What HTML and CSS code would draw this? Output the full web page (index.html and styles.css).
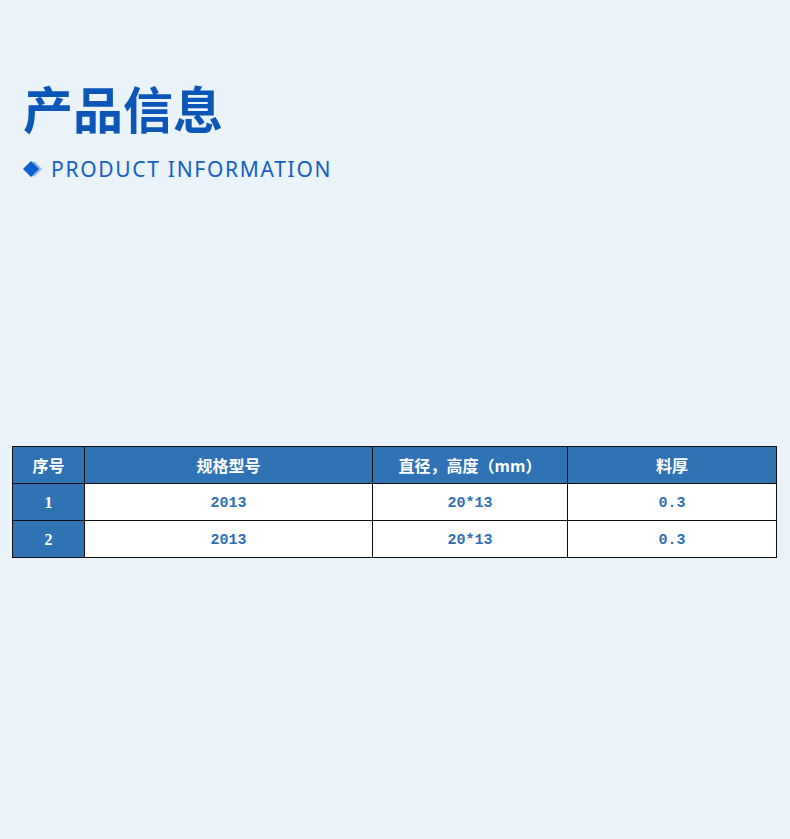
FILE: index.html
```html
<!DOCTYPE html>
<html lang="zh">
<head>
<meta charset="utf-8">
<link rel="stylesheet" href="styles.css">
</head>
<body>
<div class="page">
  <header class="head">
    <h1 class="title">产品信息</h1>
    <div class="sub">
      <svg class="diamond" width="20" height="18" viewBox="0 0 20 18">
        <polygon points="11,1 19,9 11,17 3,9" fill="#8fb8ea"/>
        <polygon points="8,1 16,9 8,17 0,9" fill="#0b5fcf"/>
      </svg>
      <span class="sub-text">PRODUCT INFORMATION</span>
    </div>
  </header>
  <table class="spec">
    <colgroup>
      <col class="c1"><col class="c2"><col class="c3"><col class="c4">
    </colgroup>
    <thead>
      <tr><th>序号</th><th>规格型号</th><th>直径，高度（mm）</th><th>料厚</th></tr>
    </thead>
    <tbody>
      <tr><th>1</th><td>2013</td><td>20*13</td><td>0.3</td></tr>
      <tr><th>2</th><td>2013</td><td>20*13</td><td>0.3</td></tr>
    </tbody>
  </table>
</div>
</body>
</html>
```
FILE: styles.css
```css
html, body {
  margin: 0;
  padding: 0;
  background: #eaf2fa;
}
.page {
  width: 790px;
  height: 839px;
  box-sizing: border-box;
  padding-top: 77px;
  font-family: "Noto Sans CJK SC", "Noto Sans", sans-serif;
}
.head {
  padding-left: 23px;
}
.title {
  margin: 0;
  font-size: 50px;
  line-height: 60px;
  font-weight: 700;
  color: #0c56b8;
}
.sub {
  display: flex;
  align-items: center;
  gap: 8px;
  margin-top: 20px;
  height: 24px;
}
.diamond {
  display: block;
}
.sub-text {
  font-family: "Noto Sans", "Open Sans", sans-serif;
  font-size: 21px;
  letter-spacing: 1.7px;
  color: #1560c4;
  line-height: 24px;
}
.spec {
  margin: 265px 0 0 12px;
  width: 765px;
  border-collapse: collapse;
  table-layout: fixed;
  font-family: "Liberation Mono", "Noto Sans CJK SC", monospace;
  font-weight: 700;
  font-size: 15px;
}
.c1 { width: 72px; }
.c2 { width: 288px; }
.c3 { width: 195px; }
.c4 { width: 209px; }
.spec th, .spec td {
  border: 1px solid #111;
  height: 37px;
  box-sizing: border-box;
  padding: 2px 0 0;
  text-align: center;
  vertical-align: middle;
}
.spec th {
  background: #2f73b5;
  color: #fff;
  font-weight: 700;
}
.spec tbody th {
  font-family: "Liberation Serif", serif;
  font-size: 16px;
}
.spec thead th {
  font-family: "Noto Sans CJK SC", sans-serif;
  font-size: 16px;
  padding-top: 0;
}
.spec td {
  background: #fff;
  color: #2f6fb5;
}
```
